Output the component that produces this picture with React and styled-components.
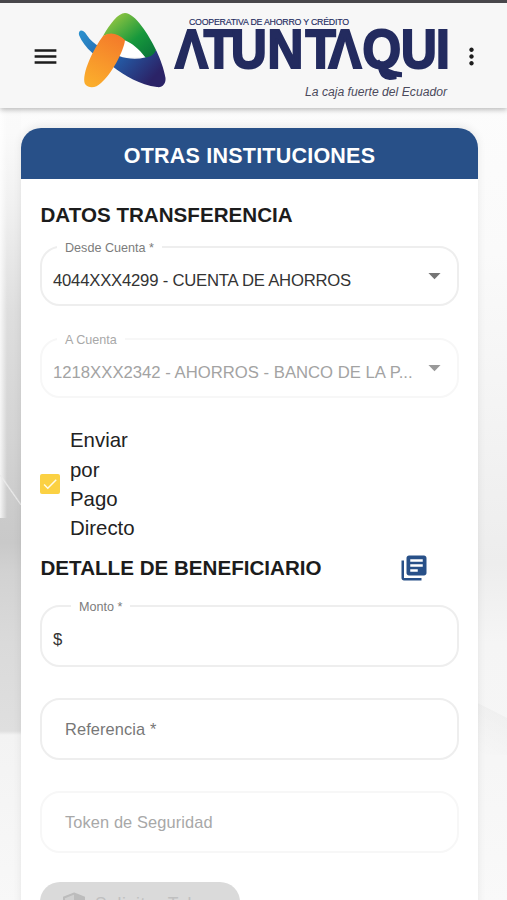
import React, { useState } from 'react';
import styled, { createGlobalStyle } from 'styled-components';
import { MdArrowDropDown, MdCheck, MdLibraryBooks, MdMenu, MdMoreVert } from 'react-icons/md';

const GlobalStyle = createGlobalStyle`
  * {
    box-sizing: border-box;
  }

  body {
    margin: 0;
    font-family: "Liberation Sans", Arial, sans-serif;
    color: #222;
  }
`;

const Page = styled.div`
  height: 900px;
  overflow: hidden;
  display: flex;
  flex-direction: column;
  border-top: 3px solid #48474b;
  background:
    linear-gradient(to top right, transparent 47%, #ebebeb 50%, transparent 54%) 0 472px / 21px 30px no-repeat,
    linear-gradient(to right, rgba(255, 255, 255, 0.8), rgba(255, 255, 255, 0) 7px) 0 0 / 21px 515px no-repeat,
    linear-gradient(to bottom, #fdfdfd 0, #fafafa 130px, #f1f1f1 200px, #dedede 310px, #d3d3d3 440px, #cbcbcb 510px, #c9c9c9 540px, #d2d2d2 570px, #dadada 640px, #dfdfdf 728px, #f3f3f3 732px, #f5f5f5 800px, #f8f8f8 900px) 0 0 / 21px 100% no-repeat,
    linear-gradient(207deg, transparent 50%, rgba(0, 0, 0, 0.022) 51%, transparent) 100% 662px / 29px 90px no-repeat,
    linear-gradient(to bottom, #fdfdfd 0, #fafafa 250px, #f4f4f4 400px, #ededed 560px, #f5f5f5 640px, #f6f6f6 760px, #f9f9f9 900px);
`;

const Header = styled.header`
  flex: none;
  height: 105px;
  display: flex;
  align-items: center;
  padding: 2px 21px 0 31px;
  background: #f7f7f7;
  box-shadow: 0 2px 5px rgba(0, 0, 0, 0.25);
`;

const IconButton = styled.button`
  display: flex;
  padding: 0;
  border: none;
  background: none;
  color: ${props => props.$color || '#1d1d1d'};
  font-size: ${props => props.$size || 29}px;
  cursor: pointer;
`;

const Logo = styled.svg`
  width: 376px;
  height: 96px;
  margin-left: 16px;
  margin-right: 6px;
  flex: none;
`;

const Card = styled.main`
  flex: 1;
  margin: 20px 29px 0 21px;
  background: #fff;
  border-radius: 20px 20px 0 0;
  box-shadow: 0 -2px 8px rgba(0, 0, 0, 0.08);
`;

const CardTitle = styled.h1`
  margin: 0;
  height: 51px;
  display: flex;
  align-items: center;
  justify-content: center;
  padding-top: 6px;
  border-radius: 20px 20px 0 0;
  background: #285088;
  color: #fff;
  font-size: 21.5px;
  letter-spacing: 0.22px;
`;

const Form = styled.form`
  display: flex;
  flex-direction: column;
  padding: 24px 19px 0;
`;

const SectionRow = styled.div`
  display: flex;
  align-items: center;
  justify-content: space-between;
  height: 24px;
  margin-top: ${props => props.$top || 0}px;
  padding-right: 30px;
`;

const SectionTitle = styled.h2`
  margin: 0;
  padding-left: 0.5px;
  font-size: 20.6px;
  line-height: 24px;
  color: #1c1c1c;
  white-space: nowrap;
`;

const Field = styled.fieldset`
  height: ${props => props.$height || 62}px;
  min-width: 0;
  margin: ${props => props.$top}px 0 0;
  padding: 0 11px;
  border: 2px solid ${props => (props.$disabled ? '#f7f7f7' : '#eeeeee')};
  border-radius: 20px;
  color: ${props => (props.$disabled ? '#a3a3a3' : '#333')};
`;

const Legend = styled.legend`
  height: 14px;
  margin-left: ${props => props.$left || 4}px;
  padding: 1px 8px 0;
  font-size: 12.6px;
  line-height: 14px;
  color: ${props => (props.$disabled ? '#a8a8a8' : '#7c7c7c')};
`;

const FieldBody = styled.div`
  display: flex;
  align-items: center;
  justify-content: space-between;
  height: ${props => props.$height || 40}px;
`;

const Value = styled.span`
  padding-top: 1px;
  font-size: 16.7px;
  letter-spacing: ${props => props.$spacing || 0}px;
  white-space: nowrap;
`;

const Placeholder = styled.span`
  padding-left: 12px;
  font-size: 16.4px;
  letter-spacing: 0.1px;
  color: ${props => (props.$disabled ? '#a8a8a8' : '#777')};
`;

const Arrow = styled(MdArrowDropDown)`
  flex: none;
  width: 29px;
  height: 29px;
  margin: -10px -3px 0 -8px;
  color: ${props => (props.$disabled ? '#999' : '#757575')};
`;

const CheckRow = styled.label`
  display: flex;
  align-items: center;
  gap: 10px;
  height: 118px;
  margin-top: 28px;
  cursor: pointer;
`;

const Box = styled.span`
  display: flex;
  align-items: center;
  justify-content: center;
  width: 20px;
  height: 20px;
  margin-top: -3px;
  border-radius: 2px;
  background: #fbd143;
  color: #fffbe8;
  font-size: 18px;
`;

const CheckLabel = styled.span`
  width: 70px;
  font-size: 20.4px;
  line-height: 29.4px;
`;

const TokenButton = styled.button`
  display: flex;
  align-items: center;
  gap: 9px;
  width: 200px;
  height: 45px;
  margin-top: 29px;
  padding: 0 22px;
  border: none;
  border-radius: 20px;
  background: #dadada;
  color: #c0c0c0;
  font-family: inherit;
  font-size: 17.5px;
  letter-spacing: 0.6px;
  white-space: nowrap;
`;

const BrandLogo = () => (
  <Logo viewBox="76 8 376 96" role="img" aria-label="Cooperativa Atuntaqui">
    <defs>
      <linearGradient id="green" x1="0" y1="0" x2="1" y2="1">
        <stop offset="0.15" stopColor="#8cc341" />
        <stop offset="0.6" stopColor="#17983c" />
        <stop offset="1" stopColor="#087039" />
      </linearGradient>
      <linearGradient id="orange" x1="0.7" y1="0" x2="0.3" y2="1">
        <stop offset="0" stopColor="#f47b2a" />
        <stop offset="1" stopColor="#fbad2c" />
      </linearGradient>
      <linearGradient id="blue" x1="0" y1="0" x2="1" y2="0.6">
        <stop offset="0" stopColor="#2b93d0" />
        <stop offset="0.6" stopColor="#25559f" />
        <stop offset="1" stopColor="#2b2367" />
      </linearGradient>
    </defs>
    <path d="M118 38 L127 38 L146 56 L119 56Z" fill="#fff" />
    <path
      d="M79 34 C78 29 82 28 85 31.500 C88 36 91 40 96 43.500 C102 48 110 52 119 55 C127 58 137 58.500 145 56.500 C150 54 153 52 156 49 C160 57 164 68 165.500 77 C166 83 162 87 157 86 C140 84 125 75 112 65 C98 58 84 47 79 34Z"
      fill="url(#blue)"
    />
    <path d="M103 35 C110 23 118 12 125 12 C135 12 149 34 156 49 C154 54 150 56 145.500 56.500 C139 48 132 42 124 39 C118 34 111 32 103 35Z" fill="url(#green)" />
    <path d="M103 35 C111 30 118 33 125 39 C124 50 111 74 101 82 C96 87 89 88 85 83 C81 73 94 47 103 35Z" fill="url(#orange)" />
    <g fill="#232b5f" fontFamily="Liberation Sans, Arial, sans-serif">
      <text x="189" y="23.500" fontSize="8.800" stroke="#232b5f" strokeWidth="0.150" textLength="160" lengthAdjust="spacing">
        COOPERATIVA DE AHORRO Y CRÉDITO
      </text>
      <text
        transform="scale(0.9 1)"
        x="194.500 226.300 256.600 297.200 339.400 365 402.700 445.500 484.500"
        y="66.600"
        fontSize="55"
        fontWeight="700"
        stroke="#232b5f"
        strokeWidth="2.200"
      >
        ΛTUNTΛQUI
      </text>
      <path d="M377 60 C383 69 391 73.500 402 73.800" fill="none" stroke="#232b5f" strokeWidth="5" />
      <text x="305" y="95" fontSize="12.500" fontStyle="italic" fill="#4b4a5c" textLength="142" lengthAdjust="spacingAndGlyphs">
        La caja fuerte del Ecuador
      </text>
    </g>
  </Logo>
);

const ShieldIcon = () => (
  <svg width="24" height="26" viewBox="0 0 24 26">
    <path d="M12 1.500 L22 5.500 V12 C22 18 18 23 12 25 C6 23 2 18 2 12 V5.500Z" fill="#d0d0d0" stroke="#bcbcbc" strokeWidth="2" />
    <path d="M12 2 L22 6 V13 H12Z M2 13 H12 V25 C6 23 2 18 2 13Z" fill="#bcbcbc" />
  </svg>
);

const App = () => {
  const [direct, setDirect] = useState(true);

  return (
    <>
      <GlobalStyle />
      <Page>
        <Header>
          <IconButton aria-label="menu"><MdMenu /></IconButton>
          <BrandLogo />
          <IconButton aria-label="opciones" $size={27}><MdMoreVert /></IconButton>
        </Header>
        <Card>
          <CardTitle>OTRAS INSTITUCIONES</CardTitle>
          <Form>
            <SectionRow>
              <SectionTitle>DATOS TRANSFERENCIA</SectionTitle>
            </SectionRow>
            <Field $top={13} $height={66}>
              <Legend>Desde Cuenta *</Legend>
              <FieldBody $height={52}>
                <Value $spacing={-0.22}>4044XXX4299 - CUENTA DE AHORROS</Value>
                <Arrow />
              </FieldBody>
            </Field>
            <Field $top={26} $height={66} $disabled>
              <Legend $disabled>A Cuenta</Legend>
              <FieldBody $height={52}>
                <Value>1218XXX2342 - AHORROS - BANCO DE LA P...</Value>
                <Arrow $disabled />
              </FieldBody>
            </Field>
            <CheckRow>
              <Box onClick={() => setDirect(!direct)}>{direct && <MdCheck />}</Box>
              <CheckLabel>Enviar por Pago Directo</CheckLabel>
            </CheckRow>
            <SectionRow $top={12}>
              <SectionTitle>DETALLE DE BENEFICIARIO</SectionTitle>
              <IconButton type="button" aria-label="beneficiarios" $color="#285088" $size={30}>
                <MdLibraryBooks />
              </IconButton>
            </SectionRow>
            <Field $top={19} $height={68}>
              <Legend $left={18}>Monto *</Legend>
              <FieldBody $height={53}>
                <Value>$</Value>
              </FieldBody>
            </Field>
            <Field $top={31}>
              <FieldBody $height={58}>
                <Placeholder>Referencia *</Placeholder>
              </FieldBody>
            </Field>
            <Field $top={31} $disabled>
              <FieldBody $height={58}>
                <Placeholder $disabled>Token de Seguridad</Placeholder>
              </FieldBody>
            </Field>
            <TokenButton type="button" disabled>
              <ShieldIcon />
              Solicitar Token
            </TokenButton>
          </Form>
        </Card>
      </Page>
    </>
  );
};

export default App;
